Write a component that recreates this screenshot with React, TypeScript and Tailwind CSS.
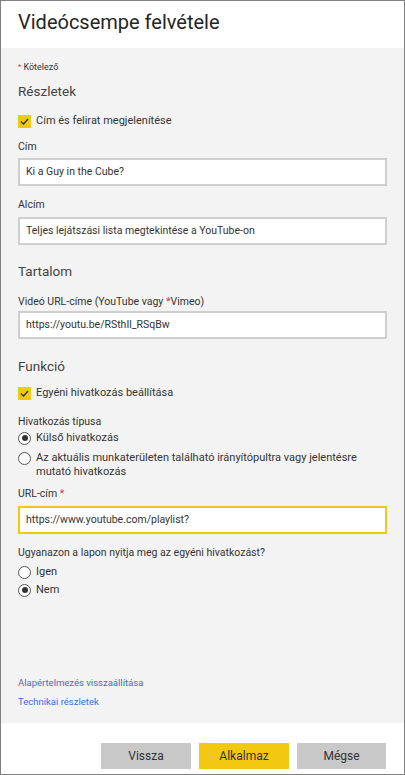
import React from "react";

const font = { fontFamily: "Roboto, 'Liberation Sans', sans-serif" };

function Check({ label }: { label: string }) {
  return (
    <div className="flex items-center h-[16px]">
      <div className="w-[13px] h-[13px] bg-[#f2c811] flex items-center justify-center">
        <svg width="9" height="7" viewBox="0 0 9 7">
          <path d="M1 3.5 L3.5 6 L8 1" fill="none" stroke="#333" strokeWidth="1.4" />
        </svg>
      </div>
      <span className="ml-[5px] text-[11px] text-[#333]">{label}</span>
    </div>
  );
}

function Radio({ checked, children, lh = "leading-[16px]" }: { checked?: boolean; children: React.ReactNode; lh?: string }) {
  return (
    <div className="flex items-start">
      <div className={"w-[13px] h-[13px] rounded-full border border-[#555] bg-white flex items-center justify-center shrink-0 " + (lh === "leading-[16px]" ? "mt-[1.5px]" : "mt-[0.5px]")}>
        {checked && <div className="w-[6px] h-[6px] rounded-full bg-[#333]" />}
      </div>
      <span className={"ml-[5px] text-[11px] text-[#333] " + lh}>{children}</span>
    </div>
  );
}

function Label({ children }: { children: React.ReactNode }) {
  return <div className="h-[14px] leading-[14px] text-[10.5px] text-[#333]">{children}</div>;
}

function Input({ value, yellow }: { value: string; yellow?: boolean }) {
  return (
    <div
      className={
        "h-[28px] w-[369px] bg-white border-2 flex items-center pl-[6px] text-[10.5px] text-[#333] " +
        (yellow ? "border-[#f2c811]" : "border-[#cfcfcf]")
      }
    >
      {value}
    </div>
  );
}

function Section({ children }: { children: React.ReactNode }) {
  return <div className="h-[20px] leading-[20px] text-[13.5px] text-[#444]">{children}</div>;
}

export default function App() {
  return (
    <div style={font} className="w-[405px] h-[775px] border border-[#808080] bg-white flex flex-col overflow-hidden">
      <div className="h-[47px] shrink-0 pl-[17px] pt-[6px]">
        <div className="text-[20px] leading-[30px] text-[#252525]">Videócsempe felvétele</div>
      </div>
      <div className="h-[675px] shrink-0 bg-[#f3f3f3] pl-[17px] flex flex-col">
        <div className="mt-[12px] h-[14px] leading-[14px] text-[9px] text-[#333] flex items-center">
          <span className="text-[#d13438] mr-[2px] text-[8px]">*</span>Kötelező
        </div>
        <div className="mt-[7px]">
          <Section>Részletek</Section>
        </div>
        <div className="mt-[12px]">
          <Check label="Cím és felirat megjelenítése" />
        </div>
        <div className="mt-[11px]">
          <Label>Cím</Label>
        </div>
        <div className="mt-[4px]">
          <Input value="Ki a Guy in the Cube?" />
        </div>
        <div className="mt-[12px]">
          <Label>Alcím</Label>
        </div>
        <div className="mt-[5px]">
          <Input value="Teljes lejátszási lista megtekintése a YouTube-on" />
        </div>
        <div className="mt-[16px]">
          <Section>Tartalom</Section>
        </div>
        <div className="mt-[14px]">
          <Label>
            Videó URL-címe (YouTube vagy <span className="text-[#d13438]">*</span>Vimeo)
          </Label>
        </div>
        <div className="mt-[2px]">
          <Input value="https://youtu.be/RSthIl_RSqBw" />
        </div>
        <div className="mt-[17px]">
          <Section>Funkció</Section>
        </div>
        <div className="mt-[9px]">
          <Check label="Egyéni hivatkozás beállítása" />
        </div>
        <div className="mt-[14px]">
          <Label>Hivatkozás típusa</Label>
        </div>
        <div className="mt-[1px]">
          <Radio checked>Külső hivatkozás</Radio>
        </div>
        <div className="mt-[5px] w-[340px]">
          <Radio lh="leading-[14px]">Az aktuális munkaterületen található irányítópultra vagy jelentésre mutató hivatkozás</Radio>
        </div>
        <div className="mt-[8px]">
          <Label>
            URL-cím <span className="text-[#d13438]">*</span>
          </Label>
        </div>
        <div className="mt-[5px]">
          <Input value="https://www.youtube.com/playlist?" yellow />
        </div>
        <div className="mt-[12px]">
          <Label>Ugyanazon a lapon nyitja meg az egyéni hivatkozást?</Label>
        </div>
        <div className="mt-[4px]">
          <Radio>Igen</Radio>
        </div>
        <div className="mt-[2px]">
          <Radio checked>Nem</Radio>
        </div>
        <div className="mt-[78px] h-[14px] leading-[14px] text-[9.5px] text-[#3a6fd8]">Alapértelmezés visszaállítása</div>
        <div className="mt-[5px] h-[14px] leading-[14px] text-[9.5px] text-[#3a6fd8]">Technikai részletek</div>
      </div>
      <div className="flex-1 flex justify-end items-start pt-[20px] pr-[18px] gap-[8px]">
        <button className="w-[90px] h-[26px] bg-[#c8c8c8] text-[12px] text-[#333]">Vissza</button>
        <button className="w-[90px] h-[26px] bg-[#f2c811] text-[12px] text-[#333]">Alkalmaz</button>
        <button className="w-[89px] h-[26px] bg-[#c8c8c8] text-[12px] text-[#333]">Mégse</button>
      </div>
    </div>
  );
}
